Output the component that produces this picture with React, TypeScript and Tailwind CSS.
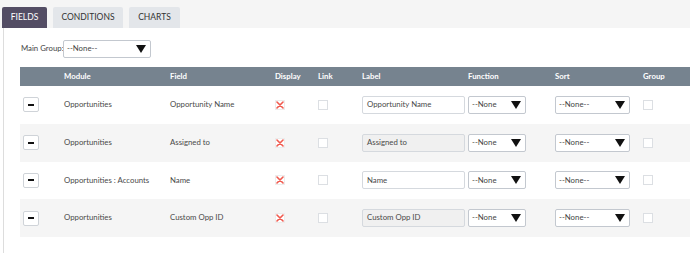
import React from "react";

const rows = [
  { module: "Opportunities", field: "Opportunity Name", label: "Opportunity Name", locked: false },
  { module: "Opportunities", field: "Assigned to", label: "Assigned to", locked: true },
  { module: "Opportunities : Accounts", field: "Name", label: "Name", locked: false },
  { module: "Opportunities", field: "Custom Opp ID", label: "Custom Opp ID", locked: true },
];

const cols = "grid grid-cols-[44px_106px_105px_43px_44px_106px_87px_88px_1fr] items-center";

function Arrow() {
  return (
    <svg width="10" height="8" viewBox="0 0 10 8" className="shrink-0">
      <path d="M0 0h10L5 8z" fill="#111" />
    </svg>
  );
}

function Select({ value, w }: { value: string; w: string }) {
  return (
    <div
      className={`${w} flex h-[18px] items-center justify-between rounded-[2px] border border-[#c3c8cf] bg-white pl-[3px] pr-[4px] text-[7.8px] text-[#444]`}
    >
      <span>{value}</span>
      <Arrow />
    </div>
  );
}

function Box() {
  return <div className="h-[10px] w-[10px] border border-[#dcdfe3] bg-white" />;
}

export default function App() {
  return (
    <div className="h-[253px] w-[690px] overflow-hidden bg-white font-['Lato',sans-serif]">
      {/* Tabs */}
      <div className="flex h-[28px] items-end gap-[6px] bg-[#f5f5f5] pl-[2px]">
        <div className="flex h-[21px] w-[45px] items-center justify-center rounded-t-[2px] bg-[#534d64] text-[8.5px] text-white">
          FIELDS
        </div>
        <div className="flex h-[21px] w-[70px] items-center justify-center rounded-t-[2px] bg-[#e3e6ea] text-[8.5px] text-[#333]">
          CONDITIONS
        </div>
        <div className="flex h-[21px] w-[51px] items-center justify-center rounded-t-[2px] bg-[#e3e6ea] text-[8.5px] text-[#333]">
          CHARTS
        </div>
      </div>

      <div className="ml-[3px] h-[225px] border-l border-[#dddddd] pl-[16px]">
        {/* Main group */}
        <div className="flex items-center pt-[12px]">
          <span className="w-[43px] whitespace-nowrap pl-[1px] text-[7.8px] text-[#444]">Main Group:</span>
          <Select value="--None--" w="w-[88px]" />
        </div>

        {/* Table */}
        <div className="mt-[9px]">
          <div className={`${cols} h-[19px] bg-[#76838f] text-[7.8px] font-bold text-white`}>
            <span />
            <span>Module</span>
            <span>Field</span>
            <span>Display</span>
            <span>Link</span>
            <span>Label</span>
            <span>Function</span>
            <span>Sort</span>
            <span>Group</span>
          </div>
          {rows.map((r, i) => (
            <div
              key={i}
              className={`${cols} h-[37.75px] text-[7.8px] text-[#4a4a4a] ${i % 2 === 1 ? "bg-[#f5f5f5]" : "bg-white"}`}
            >
              <div className="pl-[3px]">
                <div className="flex h-[15px] w-[16px] items-center justify-center rounded-[2px] border border-[#cfd3d8] bg-white">
                  <div className="h-[2px] w-[6px] bg-[#111]" />
                </div>
              </div>
              <span className="whitespace-nowrap">{r.module}</span>
              <span className="whitespace-nowrap">{r.field}</span>
              <div>
                <div className="flex h-[10px] w-[10px] items-center justify-center border border-[#ececec] bg-white">
                  <svg width="8" height="8" viewBox="0 0 8 8">
                    <path d="M1 1l6 6M7 1L1 7" stroke="#f05a4f" strokeWidth="1.6" strokeLinecap="round" />
                  </svg>
                </div>
              </div>
              <div>
                <Box />
              </div>
              <div>
                <div
                  className={`flex h-[18px] w-[103px] items-center rounded-[2px] border border-[#d5d9de] pl-[4px] ${r.locked ? "bg-[#f0f0f0]" : "bg-white"}`}
                >
                  {r.label}
                </div>
              </div>
              <Select value="--None" w="w-[58px]" />
              <Select value="--None--" w="w-[75px]" />
              <div>
                <Box />
              </div>
            </div>
          ))}
        </div>
      </div>
    </div>
  );
}
